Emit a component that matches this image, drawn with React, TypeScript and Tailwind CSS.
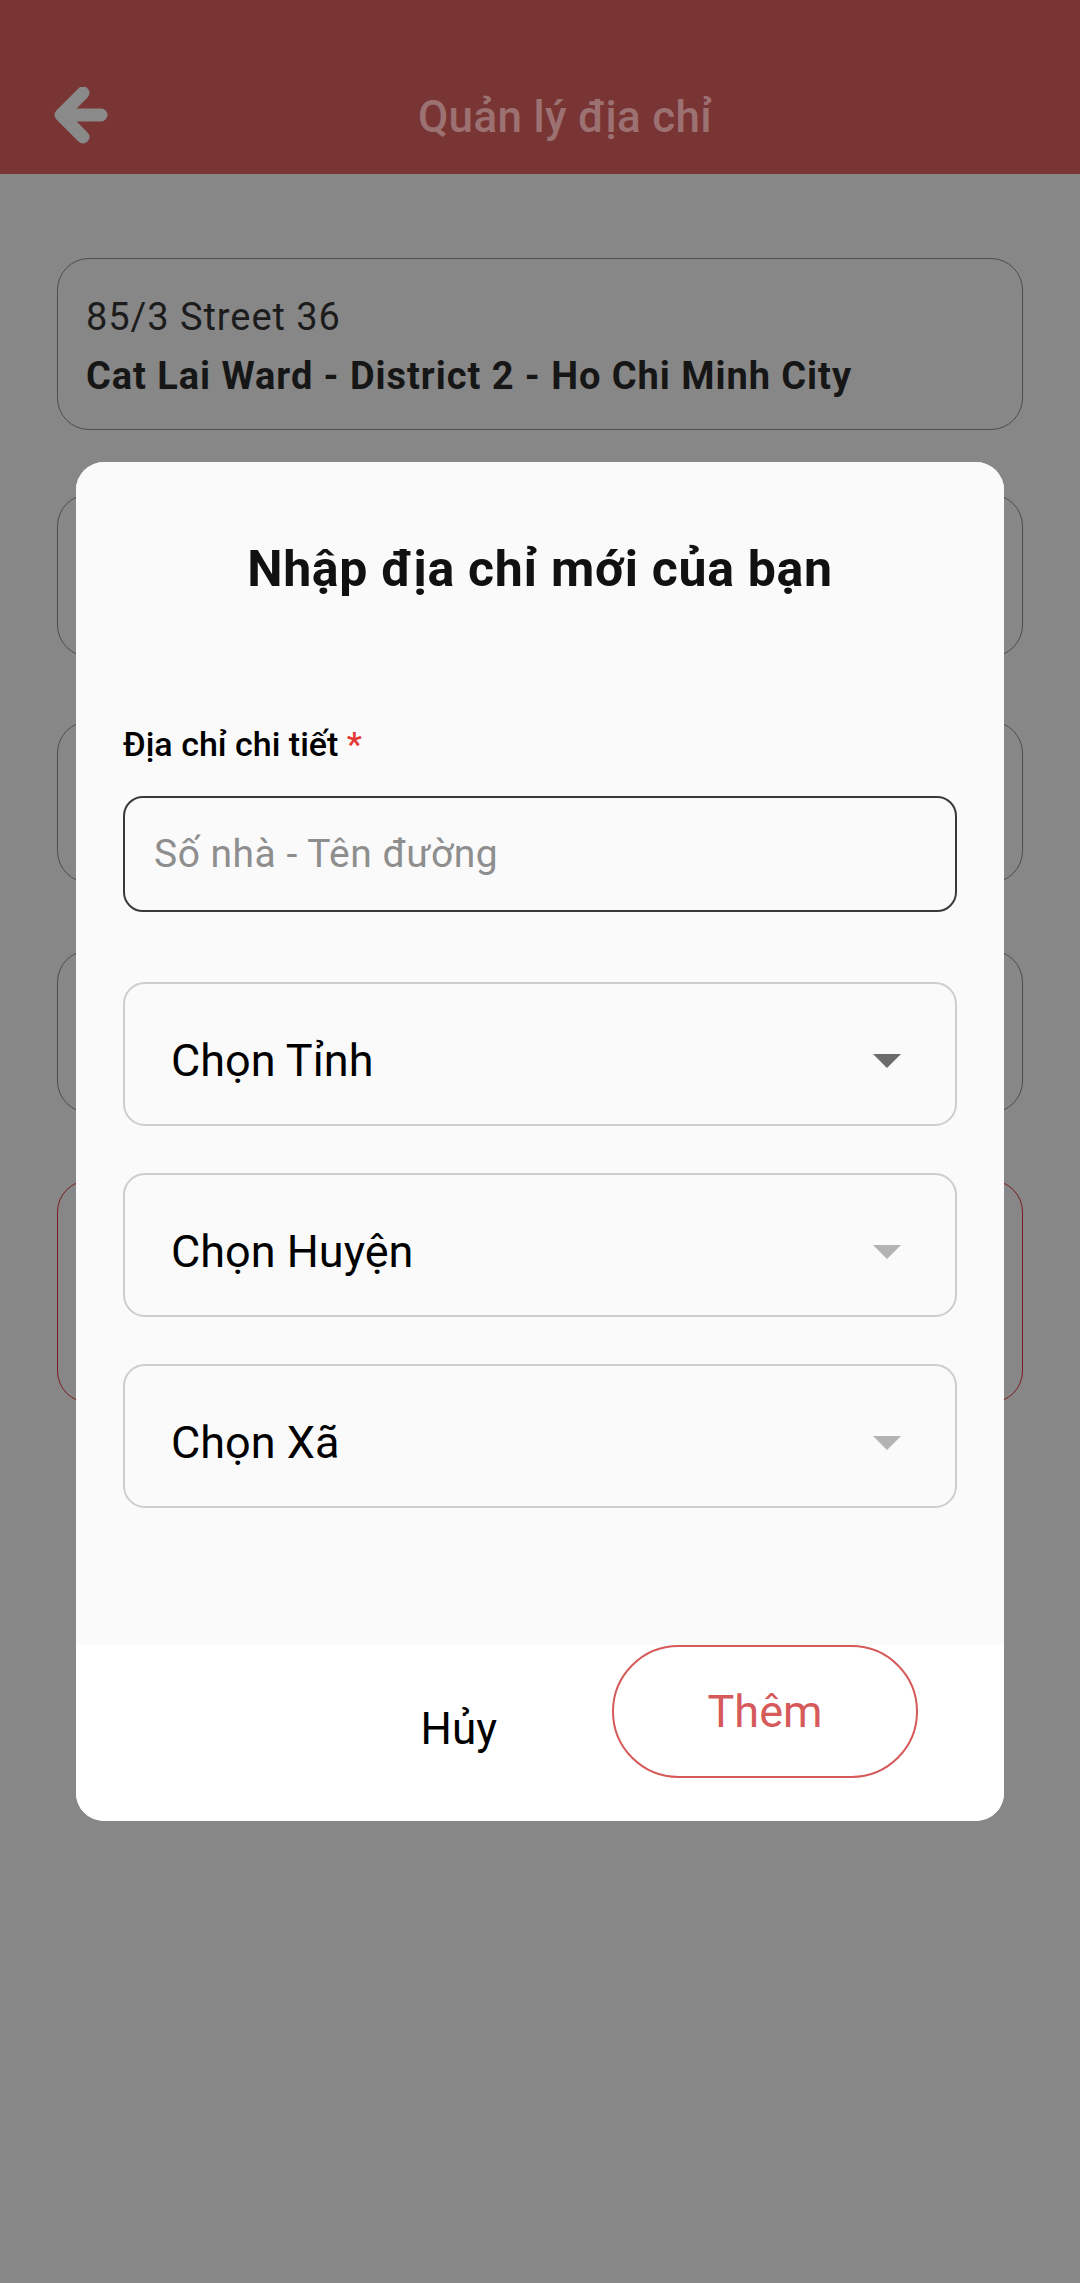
import React from 'react';

function BackArrow() {
  return (
    <svg width="56" height="60" viewBox="0 0 56 60" fill="none">
      <path
        d="M30 6 L8 28 L30 50 M8 28 L48 28"
        stroke="#8a8a8a"
        strokeWidth="13"
        strokeLinecap="round"
        strokeLinejoin="round"
      />
    </svg>
  );
}

function Caret({ color }: { color: string }) {
  return (
    <svg width="28" height="14" viewBox="0 0 28 14">
      <polygon points="0,0 28,0 14,14" fill={color} />
    </svg>
  );
}

function SelectBox({ label, caret }: { label: string; caret: string }) {
  return (
    <div className="h-[144px] flex items-center justify-between pt-[14px] pl-[46px] pr-[54px] border-2 border-[#cdcdcd] rounded-[22px]">
      <span className="text-[45px] leading-[52px] text-black">{label}</span>
      <Caret color={caret} />
    </div>
  );
}

export default function App() {
  return (
    <div
      className="relative w-[1080px] h-[2283px] bg-[#878787] overflow-hidden"
      style={{ fontFamily: 'Roboto, "Noto Sans", sans-serif' }}
    >
      {/* header */}
      <div className="h-[174px] bg-[#793434] flex items-center pt-[60px] pl-[53px]">
        <BackArrow />
        <div className="ml-[309px] text-[44px] leading-[50px] tracking-[0.3px] font-medium text-[#9c7171]">Quản lý địa chỉ</div>
      </div>

      {/* address list (dimmed) */}
      <div className="px-[57px] pt-[84px] flex flex-col">
        <div className="h-[172px] border-[1.5px] border-[#4d4d4d] rounded-[32px] px-[28px] pt-[37px]">
          <div className="text-[38px] leading-[42px] tracking-[0.95px] text-[#1c1c1c]">85/3 Street 36</div>
          <div className="mt-[16px] text-[38px] leading-[44px] tracking-[0.95px] font-bold text-[#161616]">
            Cat Lai Ward - District 2 - Ho Chi Minh City
          </div>
        </div>
        <div className="mt-[64px] h-[163px] border-[1.5px] border-[#4d4d4d] rounded-[32px]" />
        <div className="mt-[64px] h-[162px] border-[1.5px] border-[#4d4d4d] rounded-[32px]" />
        <div className="mt-[67px] h-[163px] border-[1.5px] border-[#4d4d4d] rounded-[32px]" />
        <div className="mt-[67px] h-[223px] border-[1.5px] border-[#7a1f1f] rounded-[32px]" />
      </div>

      {/* modal */}
      <div className="absolute left-[76px] top-[462px] w-[928px] h-[1359px] rounded-[28px] overflow-hidden bg-white flex flex-col">
        <div className="bg-[#fafafa] h-[1183px] px-[47px] pt-[79px]">
          <div className="text-center text-[50px] leading-[56px] tracking-[0.7px] font-bold text-[#111111]">Nhập địa chỉ mới của bạn</div>

          <div className="mt-[127px] text-[34px] leading-[40px] font-medium text-black">
            Địa chỉ chi tiết <span className="text-[#e53935]">*</span>
          </div>

          <div className="mt-[32px] h-[116px] border-2 border-[#3a3a3a] rounded-[20px] flex items-center pl-[29px]">
            <span className="text-[39px] leading-[44px] tracking-[0.5px] text-[#8e8e8e]">Số nhà - Tên đường</span>
          </div>

          <div className="mt-[70px] flex flex-col gap-[47px]">
            <SelectBox label="Chọn Tỉnh" caret="#6b6b6b" />
            <SelectBox label="Chọn Huyện" caret="#b3b3b3" />
            <SelectBox label="Chọn Xã" caret="#b3b3b3" />
          </div>
        </div>

        <div className="flex-1 bg-white flex items-start justify-end pr-[86px]">
          <button className="mt-[58px] text-[44px] leading-[52px] text-black">Hủy</button>
          <button className="ml-[115px] w-[306px] h-[133px] rounded-full border-[2.5px] border-[#d65a5a] text-[45px] leading-[52px] text-[#d65a5a] flex items-center justify-center">
            Thêm
          </button>
        </div>
      </div>
    </div>
  );
}
